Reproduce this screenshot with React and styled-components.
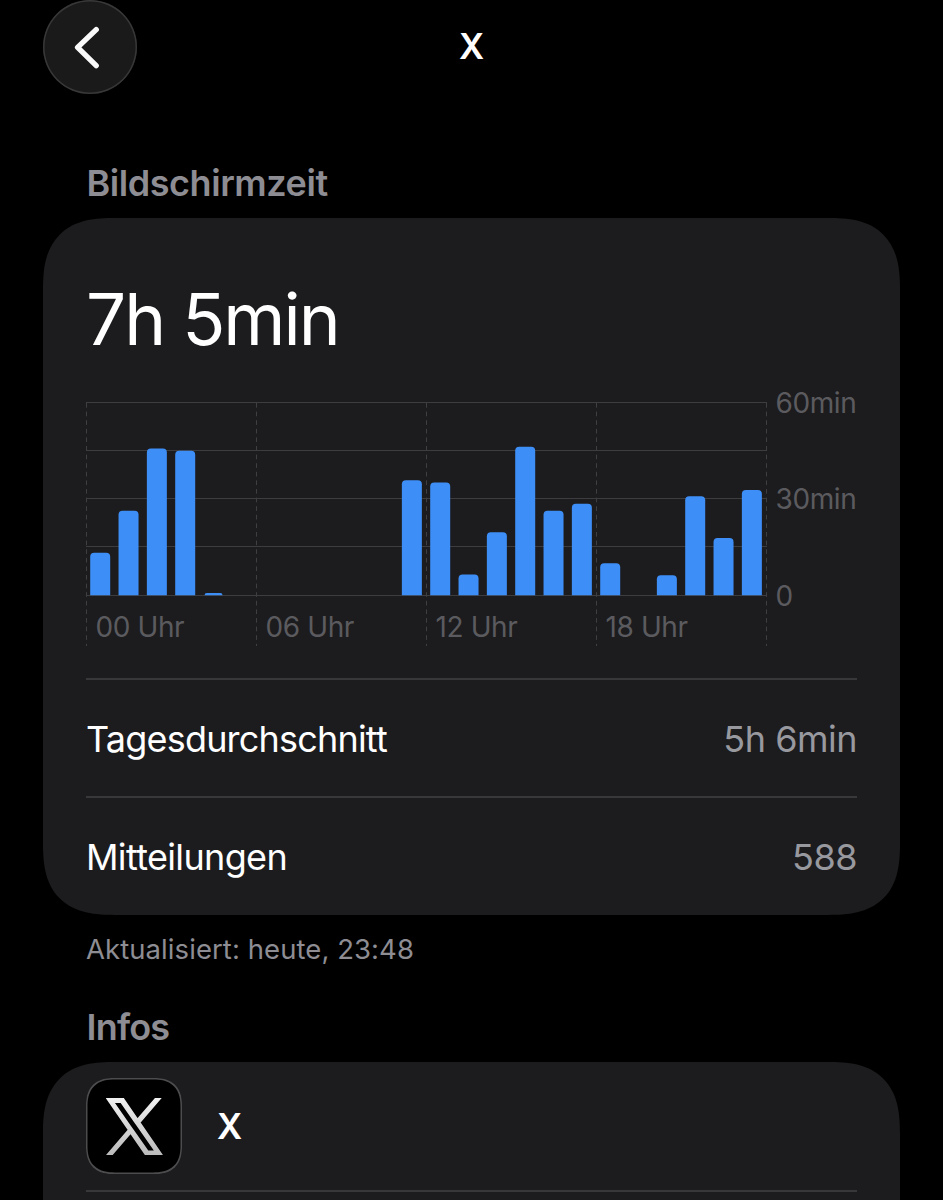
import React from 'react'
import styled, { createGlobalStyle } from 'styled-components'

const hours = ['00 Uhr', '06 Uhr', '12 Uhr', '18 Uhr']
const scale = ['60min', '30min', '0']

// minutes of use for each hour of the day
const usage = [
	13.2, 26.3, 45.6, 44.9, 0.7, 0, 0, 0, 0, 0, 0, 35.8,
	35.1, 6.5, 19.6, 46.2, 26.3, 28.5, 10, 0, 6.2, 30.8, 17.8, 32.7
]

const stats = [
	{label: 'Tagesdurchschnitt', value: '5h 6min', spacing: -0.8},
	{label: 'Mitteilungen', value: '588', spacing: -0.65}
]

const SLOT = 170 / 6
const BASE = 193.3

const barPath = (minutes, index) => {
	const h = (minutes / 60) * 193
	const r = Math.min(4, h)
	const inset = h < 4 ? 1 : 0
	const x = 4.2 + index * SLOT + inset
	const w = 20 - inset * 2
	const y = BASE - h
	return `M${x} ${BASE}V${y + r}q0 ${-r} ${r} ${-r}h${w - r * 2}q${r} 0 ${r} ${r}V${BASE}z`
}

const Chart = () => (
	<ChartCnt>
		<Plot>
			<svg width="681" height="244" viewBox="0 0 681 244">
				{[0.5, 48.5, 96.5, 144.5, 193.5].map((y) => (
					<path key={y} d={`M0 ${y}H681`} stroke="#3d3d40" />
				))}
				{[0.5, 170.5, 340.5, 510.5, 680.5].map((x) => (
					<path key={x} d={`M${x} 1V244`} stroke="#3f3f42" strokeDasharray="4.7 3.9" />
				))}
				{usage.map((minutes, index) => (
					minutes > 0 && <path key={index} d={barPath(minutes, index)} fill="#3e8ef7" />
				))}
			</svg>
			<Hours>
				{hours.map((hour) => <span key={hour}>{hour}</span>)}
			</Hours>
		</Plot>
		<Scale>
			{scale.map((step) => <span key={step}>{step}</span>)}
		</Scale>
	</ChartCnt>
)

export default function App() {
	return (
		<Page>
			<GlobalStyle />
			<Header>
				<BackButton aria-label="Zurück">
					<svg width="94" height="94" viewBox="0 0 94 94" fill="none">
						<path d="M53.2 29.6L34.6 47.4L53.2 65.6" stroke="#fafafa" strokeWidth="5.4" strokeLinecap="round" strokeLinejoin="round" />
					</svg>
				</BackButton>
				<Title>X</Title>
			</Header>

			<SectionTitle $top={67} $spacing={-0.45}>Bildschirmzeit</SectionTitle>
			<Card>
				<Total>7h 5min</Total>
				<Chart />
				{stats.map((stat) => (
					<StatRow key={stat.label}>
						<Label $spacing={stat.spacing}>{stat.label}</Label>
						<Value>{stat.value}</Value>
					</StatRow>
				))}
			</Card>
			<Updated>Aktualisiert: heute, 23:48</Updated>

			<SectionTitle $top={39} $spacing={-0.8}>Infos</SectionTitle>
			<Card>
				<AppRow>
					<AppIcon>
						<svg width="57" height="57.5" viewBox="-16 -16 1232 1259">
							<defs>
								<linearGradient id="metal" x1="0" y1="0" x2="0" y2="1">
									<stop offset="0" stopColor="#f1f1f1" />
									<stop offset="1" stopColor="#bcbcbc" />
								</linearGradient>
							</defs>
							<path fill="url(#metal)" stroke="url(#metal)" strokeWidth="32" d="M714.163 519.284L1160.89 0H1055.03L667.137 450.887L357.328 0H0L468.492 681.821L0 1226.37H105.866L515.491 750.218L842.672 1226.37H1200L714.137 519.284H714.163ZM569.165 687.828L521.697 619.934L144.011 79.6944H306.615L611.412 515.685L658.88 583.579L1055.08 1150.3H892.476L569.165 687.854V687.828Z" />
						</svg>
					</AppIcon>
					<AppName>X</AppName>
				</AppRow>
				<NextRow />
			</Card>
		</Page>
	)
}

const GlobalStyle = createGlobalStyle`
	*{
		box-sizing: border-box;
	}
	body{
		margin: 0;
		background-color: #000;
		font-family: Inter, "Liberation Sans", sans-serif;
	}
	svg{
		display: block;
	}
`

const Page = styled.main`
	width: 943px;
	height: 1200px;
	padding: 0 43px;
	overflow: hidden;
	background-color: #000;
	color: #fff;
`

const Header = styled.header`
	display: grid;
	grid-template-columns: 94px 1fr 94px;
	align-items: center;
	height: 94px;
`

const BackButton = styled.button`
	width: 94px;
	height: 94px;
	padding: 0;
	border: 0;
	border-radius: 50%;
	background-color: #1a1a1a;
	box-shadow: inset 0 0 0 1.5px #383838;
`

const Title = styled.h1`
	margin: 0;
	font-weight: 600;
	font-size: 35px;
	line-height: 42px;
	padding-bottom: 2px;
	text-align: center;
`

const SectionTitle = styled.h2`
	margin: ${({ $top }) => $top}px 0 12px;
	padding-left: 43.5px;
	font-weight: 600;
	font-size: 36px;
	line-height: 45px;
	letter-spacing: ${({ $spacing }) => $spacing}px;
	color: #8d8d93;
`

const Card = styled.section`
	width: 857px;
	padding: 0 43px;
	border-radius: 72px;
	corner-shape: superellipse(1.4);
	background-color: #1c1c1e;
`

const Total = styled.p`
	margin: 0;
	padding-top: 59px;
	font-size: 71px;
	line-height: 84px;
	letter-spacing: -2px;
`

const ChartCnt = styled.div`
	display: flex;
	gap: 8.5px;
	margin: 41px 0 32px;
	font-size: 28px;
	letter-spacing: -0.4px;
	color: #5b5b5f;
`

const Plot = styled.div`
	display: grid;
	flex: none;
	width: 681px;
	height: 244px;
	> *{
		grid-area: 1 / 1;
	}
`

const Hours = styled.div`
	display: grid;
	grid-template-columns: repeat(4, 170px);
	align-self: end;
	line-height: 38px;
	span{
		padding-left: 9.5px;
	}
`

const Scale = styled.div`
	display: flex;
	flex-direction: column;
	justify-content: space-between;
	height: 228.8px;
	margin-top: -17px;
	line-height: 36px;
`

const StatRow = styled.div`
	display: flex;
	align-items: center;
	justify-content: space-between;
	height: 118px;
	padding-top: 2px;
	border-top: 2px solid #38383a;
	font-size: 36px;
	&:last-child{
		height: 119px;
		padding-top: 0;
	}
`

const Label = styled.span`
	letter-spacing: ${({ $spacing }) => $spacing}px;
`

const Value = styled.span`
	letter-spacing: -0.5px;
	color: #98989f;
`

const Updated = styled.p`
	margin: 17px 0 0;
	padding-left: 43px;
	font-size: 27.5px;
	line-height: 34px;
	letter-spacing: 0.07px;
	color: #8d8d93;
`

const AppRow = styled.div`
	display: flex;
	align-items: center;
	gap: 35px;
	height: 128px;
`

const AppIcon = styled.div`
	display: flex;
	align-items: center;
	justify-content: center;
	width: 96px;
	height: 96px;
	padding-top: 1px;
	border-radius: 28px;
	corner-shape: superellipse(1.3);
	background-color: #000;
	box-shadow: inset 0 0 0 1.5px #4c4c4e;
`

const AppName = styled.span`
	font-weight: 600;
	font-size: 35px;
`

const NextRow = styled.div`
	height: 160px;
	border-top: 2px solid #38383a;
`
